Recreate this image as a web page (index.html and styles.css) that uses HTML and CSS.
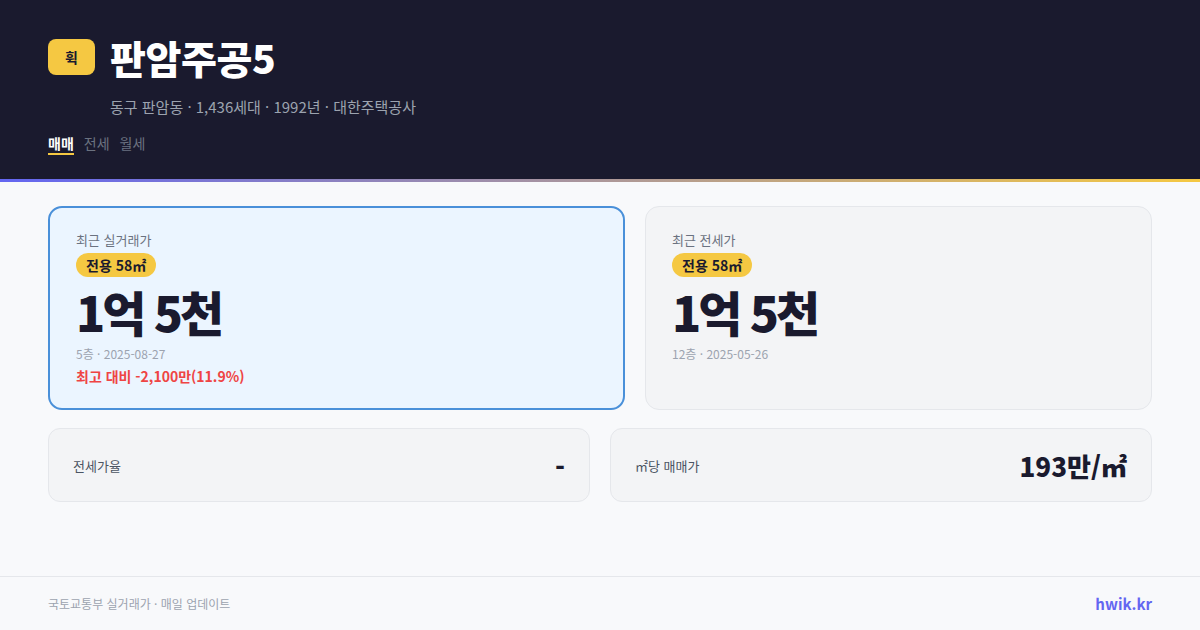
FILE: index.html
```html
<!DOCTYPE html>
<html lang="ko">
<head>
<meta charset="utf-8">
<link rel="stylesheet" href="styles.css">
</head>
<body>
<div class="page">
  <header class="hero">
    <div class="title-row">
      <div class="logo">휙</div>
      <h1 class="title">판암주공5</h1>
    </div>
    <div class="subtitle">동구 판암동 · 1,436세대 · 1992년 · 대한주택공사</div>
    <nav class="tabs">
      <span class="tab active">매매</span>
      <span class="tab">전세</span>
      <span class="tab">월세</span>
    </nav>
  </header>
  <div class="accent"></div>
  <main class="main">
    <div class="price-row">
      <section class="card card-primary">
        <div class="card-label">최근 실거래가</div>
        <div class="pill">전용 58㎡</div>
        <div class="price">1억 5천</div>
        <div class="meta">5층 · 2025-08-27</div>
        <div class="diff">최고 대비 -2,100만(11.9%)</div>
      </section>
      <section class="card card-plain">
        <div class="card-label">최근 전세가</div>
        <div class="pill">전용 58㎡</div>
        <div class="price">1억 5천</div>
        <div class="meta">12층 · 2025-05-26</div>
      </section>
    </div>
    <div class="stat-row">
      <div class="stat">
        <span class="stat-label">전세가율</span>
        <span class="stat-value">-</span>
      </div>
      <div class="stat">
        <span class="stat-label">㎡당 매매가</span>
        <span class="stat-value">193만/㎡</span>
      </div>
    </div>
  </main>
  <footer class="footer">
    <span class="source">국토교통부 실거래가 · 매일 업데이트</span>
    <span class="brand">hwik.kr</span>
  </footer>
</div>
</body>
</html>
```
FILE: styles.css
```css
* { box-sizing: border-box; margin: 0; padding: 0; }
html, body { width: 1200px; height: 630px; overflow: hidden; }
body {
  font-family: "Noto Sans CJK KR", "Noto Sans", sans-serif;
  background: #f8f9fb;
  color: #1a1a2e;
}
.page { display: flex; flex-direction: column; height: 630px; }
.hero {
  background: #1a1a2e;
  padding: 39px 48px 24px;
}
.title-row { display: flex; align-items: center; gap: 15px; height: 36px; }
.logo {
  width: 47px; height: 36px;
  background: #f5c842;
  border-radius: 8px;
  display: flex; align-items: center; justify-content: center;
  font-size: 14px; font-weight: 700; color: #1a1a2e;
}
.title {
  font-size: 39px; line-height: 36px; font-weight: 900;
  color: #ffffff; letter-spacing: -0.4px;
}
.subtitle {
  margin: 22px 0 0 62px;
  font-size: 15px; line-height: 20px; color: #9ca3af;
}
.tabs { display: flex; gap: 10px; margin-top: 16px; }
.tab {
  font-size: 14px; line-height: 20px; color: #6b7280;
  border-bottom: 2px solid transparent;
}
.tab.active { color: #ffffff; font-weight: 700; border-bottom-color: #f5c842; }
.accent { height: 3px; background: linear-gradient(90deg, #6366f1, #f5c842); }
.main { flex: 1; padding: 24px 48px 0; }
.price-row { display: grid; grid-template-columns: 577fr 507fr; gap: 20px; }
.card {
  height: 204px;
  border-radius: 14px;
  padding: 23px 26px 0;
}
.card-primary { background: #ebf5ff; border: 2px solid #4a90d9; }
.card-plain { background: #f3f4f6; border: 1px solid #e5e7eb; padding-top: 24px; }
.card-label { font-size: 13px; line-height: 18px; color: #6b7280; }
.pill {
  display: inline-block; margin-top: 4px;
  height: 24px; line-height: 24px; padding: 0 10px;
  background: #f5c842; border-radius: 12px;
  font-size: 14px; font-weight: 700; color: #1a1a2e;
}
.price {
  font-size: 48px; line-height: 60px; font-weight: 900;
  letter-spacing: -3px; color: #1a1a2e; margin-top: 4px;
}
.meta { font-size: 12px; line-height: 18px; color: #9ca3af; margin-top: 4px; }
.diff { font-size: 14px; line-height: 20px; color: #ef4444; font-weight: 600; margin-top: 3px; }
.stat-row { display: grid; grid-template-columns: 1fr 1fr; gap: 20px; margin-top: 18px; }
.stat {
  height: 74px;
  background: #f3f4f6; border: 1px solid #e5e7eb; border-radius: 12px;
  padding: 0 24px;
  display: flex; align-items: center; justify-content: space-between;
}
.stat-label { font-size: 13px; color: #4b5563; }
.stat-value { font-size: 26px; font-weight: 800; color: #1a1a2e; }
.footer {
  height: 54px;
  border-top: 1px solid #e5e7eb;
  padding: 0 48px;
  display: flex; align-items: center; justify-content: space-between;
}
.source { font-size: 12px; color: #9ca3af; }
.brand { font-size: 15px; font-weight: 700; color: #6366f1; }
```
